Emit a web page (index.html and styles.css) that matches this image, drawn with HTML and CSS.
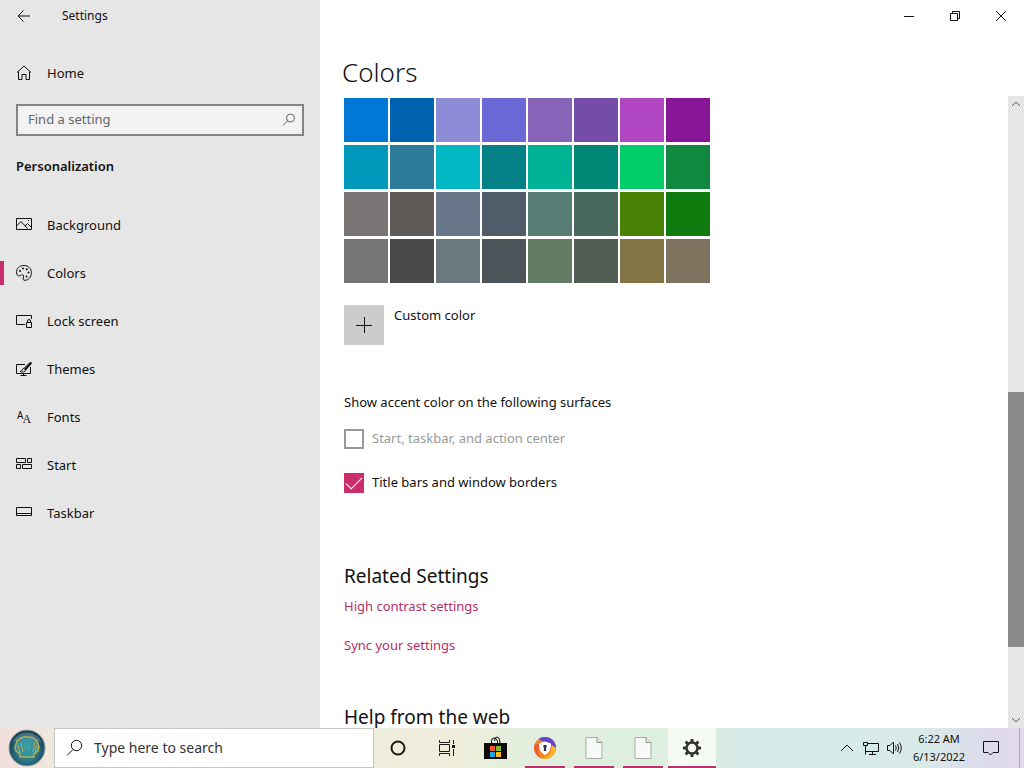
FILE: index.html
```html
<!DOCTYPE html>
<html lang="en">
<head>
    <meta charset="UTF-8">
    <meta name="viewport" content="width=device-width, initial-scale=1.0">
    <title>Settings</title>
    <link rel="stylesheet" href="styles.css">
</head>

<body>
    <div class="window">
        <aside class="sidebar">
            <div class="titlebar">
                <button type="button" class="back" aria-label="Back">
                    <svg width="14" height="12" viewBox="0 0 14 12"><path d="M13 6H1M6.500 .5L1 6l5.500 5.500"/></svg>
                </button>
                <span class="app-name">Settings</span>
            </div>

            <a href="#" class="nav-item home">
                <svg width="16" height="16" viewBox="0 0 16 16"><path d="M1 7.500L8 1l7 6.500M2.500 6.500v8h3.500v-5h4v5h3.500v-8"/></svg>
                <span>Home</span>
            </a>

            <form class="find">
                <input type="text" placeholder="Find a setting" aria-label="Find a setting">
                <button type="submit" aria-label="Search">
                    <svg width="14" height="14" viewBox="0 0 14 14"><circle cx="8.500" cy="5" r="4"/><path d="M5.500 8L1 12.500"/></svg>
                </button>
            </form>

            <h2>Personalization</h2>

            <nav>
                <a href="#" class="nav-item">
                    <svg width="16" height="16" viewBox="0 0 16 16"><path d="M.5 1.500h15v11H.5zM.5 9L5 4.500l6.500 7M9 9l2.500-2.500 4 4M12 3.500h1"/></svg>
                    <span>Background</span>
                </a>
                <a href="#" class="nav-item active">
                    <svg width="16" height="16" viewBox="0 0 16 16"><path d="M.6 8C0 3.500 3.500.5 8 .5c4.500 0 7.400 3.200 7.400 7.200 0 4.500-3 7.600-6.400 7.600-1.500 0-2.200-.8-1.800-2.200.5-1.600.6-3.200-.8-3.400-1.100-.2-1.700 1.200-3 1.200C1.800 10.900.8 9.900.6 8z"/><g class="dots"><circle cx="4" cy="6" r="1"/><circle cx="7" cy="3.500" r="1"/><circle cx="10.800" cy="4.300" r="1"/><circle cx="12.500" cy="7.500" r="1"/><circle cx="10.500" cy="11.500" r="1"/></g></svg>
                    <span>Colors</span>
                </a>
                <a href="#" class="nav-item">
                    <svg width="16" height="16" viewBox="0 0 16 16"><path d="M15.500 6V2.500H.5v9H9M10.500 9.500h5v5h-5zM11.500 9.500V8q0-1.500 1.500-1.500T14.500 8v1.500"/></svg>
                    <span>Lock screen</span>
                </a>
                <a href="#" class="nav-item">
                    <svg width="16" height="16" viewBox="0 0 16 16"><path d="M9 3.500H.5v9h14V6M7.500 12.500v2M4.500 14.500h6M14.500 1L8 7.500l1.500 1.500L15.500 2zM8 7.500C6 7.500 6.500 10 4 10.500c2 1 5.500.5 5.500-1.500" /><path d="M9 8.500l6-6.500" stroke-width="2"/></svg>
                    <span>Themes</span>
                </a>
                <a href="#" class="nav-item">
                    <span class="fonts-icon" aria-hidden="true"><span>A</span><span>A</span></span>
                    <span>Fonts</span>
                </a>
                <a href="#" class="nav-item">
                    <svg width="16" height="16" viewBox="0 0 16 16"><path d="M.5 1.500h9v4h-9zM11.500 1.500h4v4h-4zM.5 7.500h4v4h-4zM6.500 7.500h9v4h-9z"/></svg>
                    <span>Start</span>
                </a>
                <a href="#" class="nav-item">
                    <svg width="16" height="16" viewBox="0 0 16 16"><path d="M.5 2.500h15v8H.5zM.5 8.500h15"/></svg>
                    <span>Taskbar</span>
                </a>
            </nav>
        </aside>

        <main class="content">
            <div class="caption">
                <button type="button" aria-label="Minimize"><svg width="10" height="10" viewBox="0 0 10 10"><path d="M0 5.500h10"/></svg></button>
                <button type="button" aria-label="Restore"><svg width="10" height="10" viewBox="0 0 10 10"><path d="M.5 2.500h7v7h-7zM2.500 2.500v-2h7v7h-2"/></svg></button>
                <button type="button" aria-label="Close"><svg width="10" height="10" viewBox="0 0 10 10"><path d="M0 0l10 10M10 0L0 10"/></svg></button>
            </div>
            <h1>Colors</h1>

            <div class="scroll-area">
                <div class="page">
                    <div class="swatches" id="swatches"></div>

                    <div class="custom">
                        <button type="button" id="custom" class="add">
                            <svg width="16" height="16" viewBox="0 0 16 16"><path d="M0 8.500h16M8.500 0v16"/></svg>
                        </button>
                        <label for="custom">Custom color</label>
                    </div>

                    <p class="group-title">Show accent color on the following surfaces</p>
                    <div class="check disabled">
                        <input type="checkbox" id="surface-start" disabled>
                        <label for="surface-start">Start, taskbar, and action center</label>
                    </div>
                    <div class="check">
                        <input type="checkbox" id="surface-title" checked>
                        <label for="surface-title">Title bars and window borders</label>
                    </div>

                    <h3>Related Settings</h3>
                    <ul class="links">
                        <li><a href="#">High contrast settings</a></li>
                        <li><a href="#">Sync your settings</a></li>
                    </ul>

                    <h3 class="help">Help from the web</h3>
                </div>

                <div class="scrollbar">
                    <button type="button" aria-label="Scroll up"><svg width="8" height="6" viewBox="0 0 8 6"><path d="M0 5l4-4 4 4"/></svg></button>
                    <div class="track"><div class="thumb"></div></div>
                    <button type="button" aria-label="Scroll down"><svg width="8" height="6" viewBox="0 0 8 6"><path d="M0 1l4 4 4-4"/></svg></button>
                </div>
            </div>
        </main>
    </div>

    <footer class="taskbar">
        <button type="button" class="start" aria-label="Start">
            <svg width="38" height="38" viewBox="0 0 38 38">
                <defs><radialGradient id="orb" cx="50%" cy="60%" r="55%"><stop offset="0" stop-color="#3a9aa6"/><stop offset=".55" stop-color="#2a7180"/><stop offset="1" stop-color="#173f56"/></radialGradient></defs>
                <circle cx="19" cy="19" r="18" fill="url(#orb)" stroke="#8fa3aa"/>
                <path d="M4 14a16 16 0 0 1 30 0c-8-5-22-5-30 0z" fill="#6f95a3" opacity=".5"/>
                <path d="M12 28v-3l-4-3-1-4 1-3 1-3 4-3 3-1h6l3 1 4 3 1 3 1 3-1 4-4 3v3z" fill="#35939f" stroke="#b5ad57" stroke-width="1.500"/>
                <path d="M12 24l-2-8M15 23l-2-10M25 23l2-10M27 24l2-8" fill="none" stroke="#b5ad57"/>
                <path d="M17 22l-1-11M19 22V10M21 22l1-11" fill="none" stroke="#4aa3a6"/>
            </svg>
        </button>
        <label class="search">
            <svg width="18" height="18" viewBox="0 0 18 18"><circle cx="10.500" cy="6.500" r="5.200"/><path d="M7 10.500L1 16.500"/></svg>
            <input type="text" placeholder="Type here to search" aria-label="Type here to search">
        </label>

        <div class="apps">
            <button type="button" aria-label="Cortana">
                <svg width="18" height="18" viewBox="0 0 18 18"><circle cx="9" cy="9" r="6.500" fill="none" stroke="#1a1a17" stroke-width="2"/></svg>
            </button>
            <button type="button" aria-label="Task View">
                <svg width="18" height="18" viewBox="0 0 18 18" fill="none" stroke="#1a1a17"><path d="M1.500 1v2.500h10V1M1.500 17v-2.500h10V17M1.500 5.500h10v7h-10zM15.500 1v4M15.500 10v7"/><path d="M14 6h3v3h-3z" fill="#1a1a17" stroke="none"/></svg>
            </button>
            <button type="button" aria-label="Microsoft Store">
                <svg width="24" height="24" viewBox="0 0 24 24"><path d="M0 7h23v16H0z" fill="#0b0b0a"/><path d="M7.500 8V5q0-3 2.500-3t3.500 3v3M10.500 5q0-4 2.500-4t3 5v2" fill="none" stroke="#0b0b0a"/><path d="M6 10h5v5H6z" fill="#f05a28"/><path d="M12 10h5v5h-5z" fill="#7fb832"/><path d="M6 16h5v5H6z" fill="#20a5e4"/><path d="M12 16h5v5h-5z" fill="#fdb813"/></svg>
            </button>
            <button type="button" class="running" aria-label="Secure Browser">
                <svg width="22" height="22" viewBox="0 0 22 22"><circle cx="11" cy="11" r="11" fill="#f58220"/><path d="M5 1.800A11 11 0 0 1 22 11c-3 0-4-4-8-5.500C10 4 7 5 5 1.800z" fill="#6344cf"/><path d="M22 11a11 11 0 0 1-15 10.200C13 21 18 17 18 8z" fill="#fdb52a"/><path d="M1 7a11 11 0 0 0 6 14c-3-3-4-8-1-14z" fill="#ee5a3c"/><path d="M11 4.500l6 2c0 5-1 9-6 11.500-5-2.500-6-6.500-6-11.500z" fill="#fff"/><circle cx="11" cy="9.500" r="1.800" fill="#35295e"/><path d="M10.200 10h1.600l.5 4h-2.600z" fill="#35295e"/></svg>
            </button>
            <button type="button" class="running" aria-label="Document">
                <svg width="18" height="22" viewBox="0 0 18 22"><path d="M1 .5h11l5 5v16H1z" fill="#f8faf7" stroke="#a7afa7"/><path d="M12 .5v5h5" fill="#e3e7e2" stroke="#8d958d"/></svg>
            </button>
            <button type="button" class="running" aria-label="Document">
                <svg width="18" height="22" viewBox="0 0 18 22"><path d="M1 .5h11l5 5v16H1z" fill="#f8faf7" stroke="#a7afa7"/><path d="M12 .5v5h5" fill="#e3e7e2" stroke="#8d958d"/></svg>
            </button>
            <button type="button" class="running current" aria-label="Settings">
                <svg width="20" height="20" viewBox="0 0 20 20" fill="none" stroke="#333630"><circle cx="10" cy="10" r="5.500" stroke-width="2.500"/><path d="M10 1v3M10 16v3M1 10h3M16 10h3M3.600 3.600l2.200 2.200M14.200 14.200l2.200 2.200M3.600 16.400l2.200-2.200M14.200 5.800l2.200-2.200" stroke-width="3"/></svg>
            </button>
        </div>

        <div class="tray">
            <button type="button" aria-label="Show hidden icons"><svg width="14" height="8" viewBox="0 0 14 8"><path d="M1 7l6-6 6 6"/></svg></button>
            <button type="button" aria-label="Network"><svg width="16" height="15" viewBox="0 0 16 15"><path d="M5 2.500h10.500v8H3M.5 1.500h4v3h-4zM2.500 4.500v9M9.500 10.500v3M6 13.500h7"/></svg></button>
            <button type="button" aria-label="Volume"><svg width="16" height="14" viewBox="0 0 16 14"><path d="M.5 4.500H3l3.500-3.500v12L3 9.500H.5zM8.500 4.500q1.500 2.500 0 5M10.500 3q2.500 4 0 8M12.500 1.500q3.500 5.500 0 11"/></svg></button>
            <div class="clock"><span>6:22 AM</span><span>6/13/2022</span></div>
            <button type="button" class="action" aria-label="Action Center"><svg width="18" height="18" viewBox="0 0 18 18"><path d="M1.500 2.500h15v11H11L8.500 16 6 13.500H1.500z"/></svg></button>
            <button type="button" class="desktop" aria-label="Show desktop"></button>
        </div>
    </footer>

    <script>
        const colors = [
            ["#0078d7", "#0063b1", "#8e8cd8", "#6b69d6", "#8764b8", "#744da9", "#b146c2", "#881798"],
            ["#0099bc", "#2d7d9a", "#00b7c3", "#038387", "#00b294", "#018574", "#00cc6a", "#10893e"],
            ["#7a7574", "#5d5a58", "#68768a", "#515c6b", "#567c73", "#486860", "#498205", "#107c10"],
            ["#767676", "#4c4a48", "#69797e", "#4a5459", "#647c64", "#525e54", "#847545", "#7e735f"]
        ];
        const swatches = document.getElementById("swatches");
        colors.flat().forEach(color => {
            const button = document.createElement("button");
            button.type = "button";
            button.style.backgroundColor = color;
            button.setAttribute("aria-label", color);
            swatches.appendChild(button);
        });
    </script>
</body>
</html>
```

FILE: styles.css
```css
* {
  box-sizing: border-box;
}

body {
  margin: 0;
  height: 100vh;
  display: flex;
  flex-direction: column;
  overflow: hidden;
  font-family: "Noto Sans", "Open Sans", sans-serif;
  font-size: 13px;
  line-height: 20px;
  color: #111;
}

button {
  display: flex;
  align-items: center;
  justify-content: center;
  padding: 0;
  border: none;
  background: none;
}

input {
  font: inherit;
  color: inherit;
}

a {
  text-decoration: none;
}

h1, h2, h3, p, ul {
  margin: 0;
  padding: 0;
  font-weight: normal;
}

svg {
  flex: none;
}

.window svg,
.search svg,
.tray svg {
  fill: none;
  stroke: #111;
}

.window {
  flex: 1;
  min-height: 0;
  display: flex;
}

/* sidebar */
.sidebar {
  flex: 0 0 320px;
  background: #e6e6e6;
}

.titlebar {
  display: flex;
  align-items: center;
  height: 32px;
  font-size: 12px;
}

.back {
  width: 48px;
  height: 32px;
}

.app-name {
  padding-left: 14px;
}

.nav-item {
  display: flex;
  align-items: center;
  gap: 15px;
  height: 48px;
  padding-left: 16px;
  color: #111;
}

.home {
  margin-top: 17px;
}

.nav-item .dots {
  fill: #111;
  stroke: none;
}

.fonts-icon {
  display: flex;
  align-items: baseline;
  width: 16px;
  padding-left: 1px;
  font-size: 10px;
}

.fonts-icon span:last-child {
  padding-top: 4px;
  margin-left: -1px;
  font-family: "Liberation Serif", serif;
  font-size: 12px;
  align-self: flex-start;
}

.active {
  background: linear-gradient(#cb2e6d, #cb2e6d) left center / 4px 24px no-repeat;
}

.find {
  display: flex;
  height: 32px;
  margin: 7px 16px 0;
  background: #f2f2f2;
  border: 2px solid #858585;
}

.find input {
  flex: 1;
  min-width: 0;
  padding: 0 10px 2px;
  border: none;
  background: none;
}

.find button {
  width: 26px;
}

.find svg {
  stroke: #666;
}

::placeholder {
  color: #666;
  opacity: 1;
}

.sidebar h2 {
  margin: 20px 16px 25px;
  font-size: 13px;
  font-weight: 600;
}

/* content */
.content {
  flex: 1;
  min-width: 0;
  display: flex;
  flex-direction: column;
  background: #fff;
}

.caption {
  display: flex;
  justify-content: flex-end;
}

.caption button {
  width: 46px;
  height: 32px;
}

h1 {
  padding: 20px 22px 4px;
  font-size: 26px;
  line-height: 40px;
  font-weight: 300;
}

.scroll-area {
  flex: 1;
  min-height: 0;
  display: flex;
}

.page {
  flex: 1;
  overflow: hidden;
  padding: 2px 24px 0;
}

.swatches {
  display: grid;
  grid-template-columns: repeat(8, 44px);
  grid-auto-rows: 44px;
  gap: 3px 2px;
}

.custom {
  display: flex;
  gap: 10px;
  margin-top: 22px;
}

.add {
  width: 40px;
  height: 40px;
  background: #ccc;
}

.group-title {
  margin: 47px 0 17px;
}

.check {
  display: flex;
  align-items: center;
  gap: 8px;
  margin-bottom: 24px;
}

.check label {
  padding-bottom: 1px;
  line-height: 19px;
}

.check input {
  appearance: none;
  width: 20px;
  height: 20px;
  margin: 0;
  border: 2px solid #555;
}

.check input:checked {
  display: grid;
  place-items: center;
  border: none;
  background: #cb2e6d;
}

.check input:checked::before {
  content: "";
  width: 15px;
  height: 7px;
  margin-bottom: 5px;
  border: solid #fff;
  border-width: 0 0 1px 1px;
  transform: rotate(-45deg);
}

.check input:disabled {
  border-color: #999;
}

.disabled {
  color: #999;
}

h3 {
  margin-top: 69px;
  font-size: 19px;
  line-height: 28px;
}

.links {
  list-style: none;
  margin-top: 6px;
}

.links li {
  margin-bottom: 19px;
}

.links a {
  color: #b42f67;
}

.help {
  margin-top: 48px;
}

.scrollbar {
  width: 16px;
  display: flex;
  flex-direction: column;
  background: #e6e6e6;
}

.scrollbar button {
  height: 16px;
}

.scrollbar svg {
  stroke: #555;
}

.track {
  flex: 1;
  display: flex;
  flex-direction: column;
  justify-content: flex-end;
  padding-bottom: 65px;
}

.thumb {
  height: 255px;
  background: #8a8a8a;
}

/* taskbar */
.taskbar {
  display: flex;
  height: 40px;
  background: linear-gradient(to right, #f3dfdc, #eeeadb 6%, #eeeedb 45%, #e0eedf 53%, #ddeee0 68%, #d4e9e8 74%, #d8ebe7 90%, #ded9ec 97%, #e2daf0);
}

.start {
  width: 54px;
}

.search {
  flex: 0 1 320px;
  display: flex;
  align-items: center;
  gap: 10px;
  padding-left: 11px;
  background: #fff;
  border: 1px solid #c4c4c0;
}

.search input {
  flex: 1;
  min-width: 0;
  padding: 0;
  border: none;
  background: none;
  font-size: 14px;
}

.search ::placeholder {
  color: #333;
}

.apps {
  display: flex;
  gap: 1px;
}

.apps button {
  width: 48px;
}

.running {
  background: linear-gradient(#b9316c, #b9316c) center bottom / 40px 2px no-repeat;
}

.current {
  background-color: #f5faf3;
  background-size: 100% 2px;
}

.tray {
  display: flex;
  margin-left: auto;
}

.tray button {
  width: 24px;
}

.clock {
  display: flex;
  flex-direction: column;
  justify-content: center;
  width: 64px;
  font-size: 11px;
  line-height: 18px;
  text-align: center;
}

.tray .action {
  width: 40px;
}

.tray .desktop {
  width: 5px;
  margin-left: 8px;
  border-left: 1px solid #a9a9b8;
}
```
